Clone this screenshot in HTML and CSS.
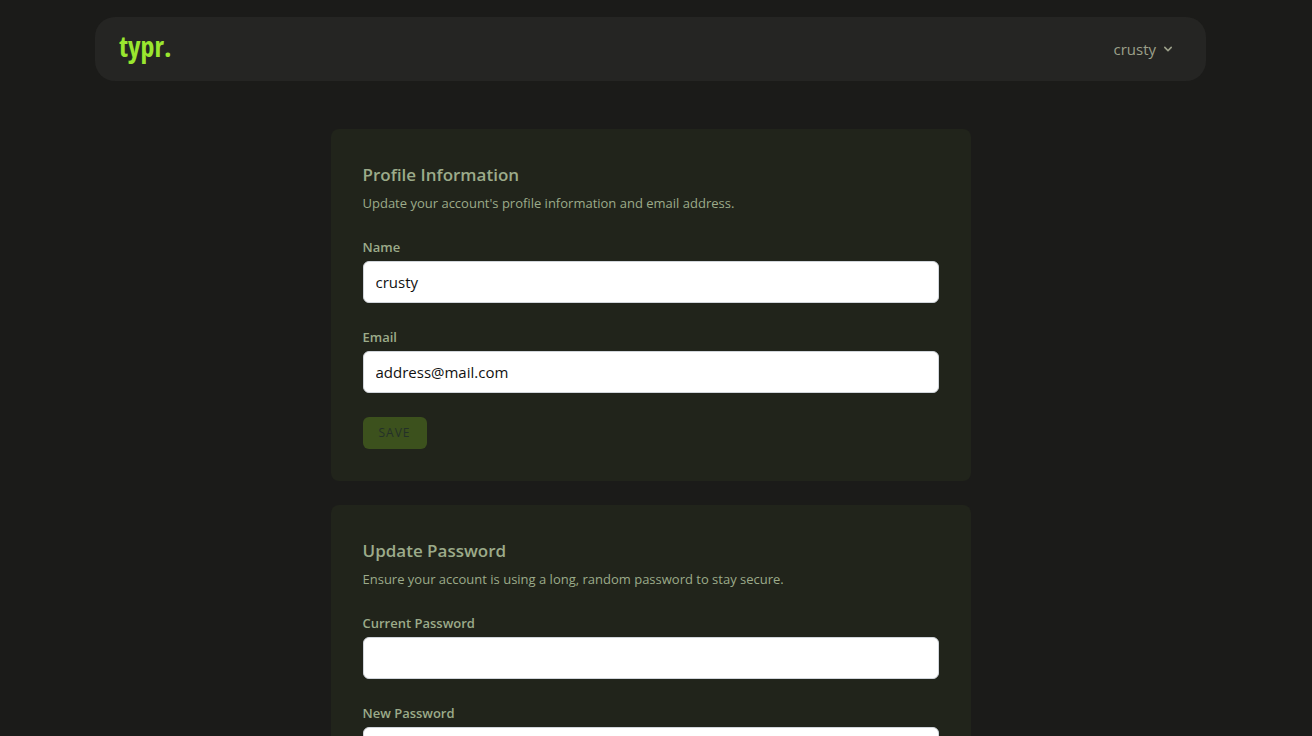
FILE: index.html
```html
<!DOCTYPE html>
<html lang="en">
<head>
<meta charset="utf-8">
<meta name="viewport" content="width=device-width, initial-scale=1">
<title>typr.</title>
<link rel="stylesheet" href="styles.css">
</head>
<body>
<header class="site-header">
  <nav class="navbar">
    <a class="logo" href="#">typr.</a>
    <button class="user-menu" type="button">
      <span>crusty</span>
      <svg class="chevron" viewBox="0 0 20 20" aria-hidden="true"><path fill="currentColor" fill-rule="evenodd" clip-rule="evenodd" d="M5.293 7.293a1 1 0 011.414 0L10 10.586l3.293-3.293a1 1 0 111.414 1.414l-4 4a1 1 0 01-1.414 0l-4-4a1 1 0 010-1.414z"/></svg>
    </button>
  </nav>
</header>
<main class="content">
  <section class="card">
    <h2 class="card-title">Profile Information</h2>
    <p class="card-text">Update your account's profile information and email address.</p>
    <form class="form">
      <div class="field">
        <label class="label" for="name">Name</label>
        <input class="input" id="name" type="text" value="crusty">
      </div>
      <div class="field">
        <label class="label" for="email">Email</label>
        <input class="input" id="email" type="email" value="address@mail.com">
      </div>
      <button class="save" type="submit">Save</button>
    </form>
  </section>
  <section class="card">
    <h2 class="card-title">Update Password</h2>
    <p class="card-text">Ensure your account is using a long, random password to stay secure.</p>
    <form class="form">
      <div class="field">
        <label class="label" for="current">Current Password</label>
        <input class="input" id="current" type="password">
      </div>
      <div class="field">
        <label class="label" for="new">New Password</label>
        <input class="input" id="new" type="password">
      </div>
    </form>
  </section>
</main>
</body>
</html>
```

FILE: styles.css
```css
*, *::before, *::after { box-sizing: border-box; }

html {
  background: #1b1b19;
  scrollbar-width: none;
}

body {
  margin: 0;
  padding-right: 11px;
  color: #9cab8a;
  font: 15px/24px "Open Sans", "Noto Sans", sans-serif;
}

h2, p { margin: 0; }

.site-header { padding: 17px 95px 0; }

.navbar {
  display: flex;
  align-items: center;
  justify-content: space-between;
  height: 64px;
  padding: 0 30px 0 24px;
  border-radius: 20px;
  background: #252523;
}

.logo {
  padding-bottom: 6px;
  color: #9ae62f;
  font: 800 28px/36px "Liberation Sans Narrow", "Open Sans Condensed", "DejaVu Sans Condensed", sans-serif;
  text-decoration: none;
}

.user-menu {
  display: flex;
  align-items: center;
  gap: 4px;
  padding: 0;
  border: 0;
  background: none;
  color: #9ca08a;
  font: inherit;
}

.chevron {
  width: 16px;
  height: 16px;
}

.content {
  display: flex;
  flex-direction: column;
  gap: 24px;
  max-width: 640px;
  margin: 48px auto;
}

.card {
  padding: 32px;
  border-radius: 8px;
  background: #21241b;
}

.card-title {
  font-size: 17px;
  font-weight: 600;
  line-height: 28px;
}

.card-text {
  margin-top: 4px;
  font-size: 13px;
  line-height: 20px;
}

.form {
  display: flex;
  flex-direction: column;
  align-items: flex-start;
  gap: 24px;
  margin-top: 24px;
}

.field {
  display: flex;
  flex-direction: column;
  gap: 4px;
  width: 100%;
}

.label {
  font-size: 13px;
  font-weight: 600;
  line-height: 20px;
}

.input {
  width: 100%;
  height: 42px;
  padding: 8px 12px;
  border: 1px solid #d1d5db;
  border-radius: 6px;
  background: #fff;
  color: #111;
  font: inherit;
}

.save {
  padding: 8px 16px;
  border: 0;
  border-radius: 6px;
  background: #3c511d;
  color: #243029;
  font: 500 12px/16px "Open Sans", "Noto Sans", sans-serif;
  letter-spacing: 1px;
  text-transform: uppercase;
}
```
